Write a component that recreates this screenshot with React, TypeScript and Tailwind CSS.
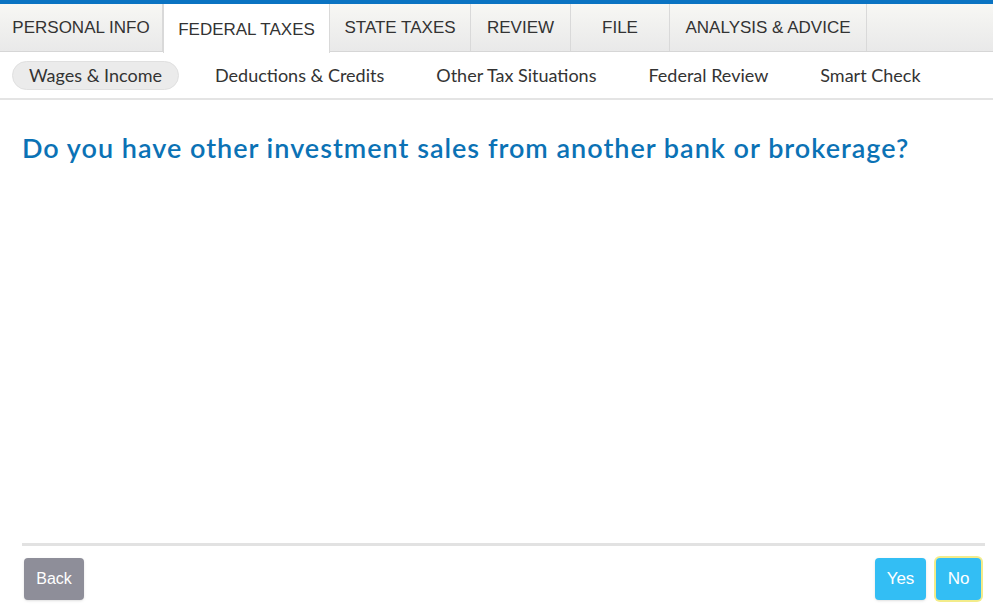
import React from "react";

const tabs = [
  { label: "PERSONAL INFO", w: 163 },
  { label: "FEDERAL TAXES", w: 167, active: true },
  { label: "STATE TAXES", w: 141 },
  { label: "REVIEW", w: 100 },
  { label: "FILE", w: 99 },
  { label: "ANALYSIS & ADVICE", w: 197 },
];

const subs = ["Wages & Income", "Deductions & Credits", "Other Tax Situations", "Federal Review", "Smart Check"];

export default function App() {
  return (
    <div className="w-[993px] h-[613px] bg-white flex flex-col overflow-hidden">
      <div className="h-[4px] bg-[#0a73c2]" />
      <div className="flex h-[48px] bg-gradient-to-b from-[#f7f7f4] to-[#e9e9e9] border-b border-[#d6d6d6]" style={{ fontFamily: '"Liberation Sans", Arial, sans-serif' }}>
        {tabs.map((t) => (
          <div
            key={t.label}
            style={{ width: t.w }}
            className={
              "flex items-center justify-center text-[17px] text-[#333] border-r border-[#d9d9d9] " +
              (t.active ? "bg-white -mb-px h-[49px] border-l pt-[2px]" : "")
            }
          >
            {t.label}
          </div>
        ))}
      </div>
      <div className="h-[48px] flex items-center pl-[12px] gap-[20px] border-b-2 border-[#e4e4e4] text-[18px] text-[#333]" style={{ fontFamily: 'Lato, "Open Sans", sans-serif' }}>
        {subs.map((s, i) => (
          <div key={s} className={"h-[29px] flex items-center px-[16px] rounded-full " + (i === 0 ? "bg-[#ebebeb] border border-[#e0e0e0]" : "")}>
            {s}
          </div>
        ))}
      </div>
      <div className="flex-1 flex flex-col px-[22px]">
        <h1 className="mt-[30px] text-[27px] font-semibold tracking-[1px] text-[#0b72b5] leading-[36px]" style={{ fontFamily: 'Lato, "Open Sans", sans-serif' }}>
          Do you have other investment sales from another bank or brokerage?
        </h1>
        <div className="flex-1" />
        <div className="h-[3px] bg-[#e2e2e2] mr-[-14px]" />
        <div className="flex items-center justify-between mt-[12px] mb-[13px] pl-[2px] mr-[-10px]" style={{ fontFamily: '"Liberation Sans", Arial, sans-serif' }}>
          <div className="h-[42px] w-[60px] rounded-[4px] bg-[#8e8e99] text-white text-[16px] flex items-center justify-center shadow-sm">Back</div>
          <div className="flex gap-[10px]">
            <div className="h-[42px] w-[51px] rounded-[4px] bg-[#33bef4] text-white text-[17px] flex items-center justify-center shadow-sm">Yes</div>
            <div className="h-[42px] w-[45px] rounded-[4px] bg-[#33bef4] text-white text-[17px] flex items-center justify-center ring-2 ring-[#f3ec8a]">No</div>
          </div>
        </div>
      </div>
    </div>
  );
}
